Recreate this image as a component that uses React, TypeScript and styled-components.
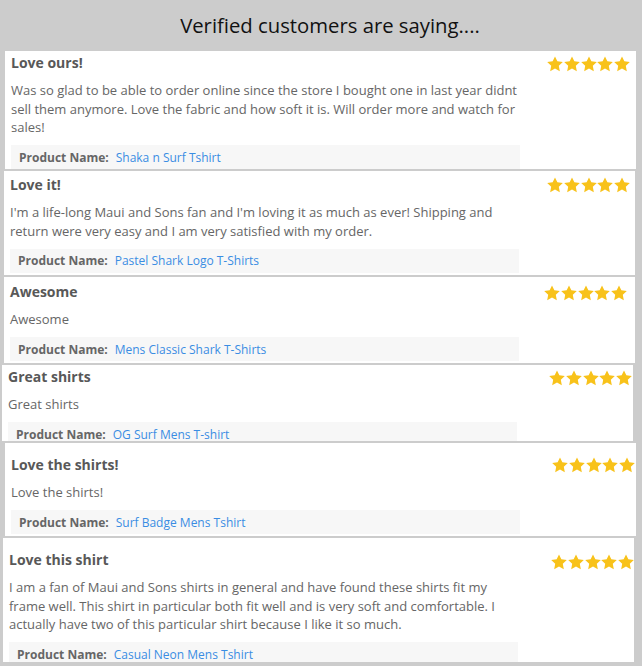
import React from "react";
import styled, { createGlobalStyle } from "styled-components";

const GlobalStyle = createGlobalStyle`
  html, body {
    margin: 0;
    padding: 0;
    background: #cccccc;
  }
  body {
    font-family: "Open Sans", "Liberation Sans", Arial, sans-serif;
    overflow: hidden;
  }
`;

const Page = styled.div`
  width: 642px;
  height: 666px;
  background: #cccccc;
  overflow: hidden;
  display: flex;
  flex-direction: column;
`;

const Heading = styled.h2`
  margin: 0;
  height: 51px;
  display: flex;
  align-items: center;
  justify-content: center;
  font-family: "Open Sans", sans-serif;
  font-weight: 400;
  font-size: 20.3px;
  color: #111;
  padding: 0 0 1px 18px;
  box-sizing: border-box;
`;

const List = styled.div`
  display: flex;
  flex-direction: column;
  gap: 2px;
`;

const Card = styled.div<{ $x: number; $pt: number; $pb: number; $h?: number }>`
  box-sizing: border-box;
  width: 631px;
  flex: none;
  margin-left: ${(p) => p.$x}px;
  background: #ffffff;
  padding: ${(p) => p.$pt}px 6px ${(p) => p.$pb}px 6px;
  display: flex;
  align-items: flex-start;
  ${(p) => (p.$h ? `height: ${p.$h}px; overflow: hidden;` : "")}
`;

const Content = styled.div`
  width: 509px;
  flex: none;
  display: flex;
  flex-direction: column;
`;

const Title = styled.div`
  font-size: 14px;
  line-height: 20px;
  font-weight: 700;
  color: #585858;
`;

const Body = styled.p`
  margin: 8px 0 0 0;
  font-size: 13px;
  line-height: 18.5px;
  color: #666666;
`;

const ProductBar = styled.div`
  margin-top: 8.5px;
  height: 24px;
  flex: none;
  background: #f7f7f7;
  display: flex;
  align-items: center;
  padding-left: 8px;
  font-size: 12px;
`;

const Label = styled.span`
  font-weight: 700;
  color: #666666;
  margin-right: 7px;
`;

const ProductLink = styled.a`
  color: #3a8de3;
  text-decoration: none;
`;

const Stars = styled.div<{ $sx: number; $sy: number }>`
  margin-left: auto;
  margin-right: ${(p) => p.$sx}px;
  margin-top: ${(p) => p.$sy}px;
  display: flex;
  gap: 0.75px;
`;

const Star = () => (
  <svg width="16" height="16" viewBox="0 0 16 16">
    <polygon
      fill="#f8c21a"
      points="8,0.4 10.35,5.36 15.8,6.07 11.8,9.84 12.82,15.23 8,12.6 3.18,15.23 4.2,9.84 0.2,6.07 5.65,5.36"
    />
  </svg>
);

type Review = {
  title: string;
  body: string;
  product: string;
  x: number;
  pt: number;
  pb: number;
  sx: number;
  sy: number;
  h?: number;
};

const reviews: Review[] = [
  {
    title: "Love ours!",
    body:
      "Was so glad to be able to order online since the store I bought one in last year didnt sell them anymore. Love the fabric and how soft it is. Will order more and watch for sales!",
    product: "Shaka n Surf Tshirt",
    x: 5,
    pt: 2,
    pb: 0,
    sx: 0,
    sy: 3,
  },
  {
    title: "Love it!",
    body:
      "I'm a life-long Maui and Sons fan and I'm loving it as much as ever! Shipping and return were very easy and I am very satisfied with my order.",
    product: "Pastel Shark Logo T-Shirts",
    x: 4,
    pt: 4,
    pb: 2.5,
    sx: -1,
    sy: 2,
  },
  {
    title: "Awesome",
    body: "Awesome",
    product: "Mens Classic Shark T-Shirts",
    x: 4,
    pt: 5,
    pb: 2,
    sx: 2,
    sy: 3,
  },
  {
    title: "Great shirts",
    body: "Great shirts",
    product: "OG Surf Mens T-shirt",
    x: 2,
    pt: 2,
    pb: 0,
    sx: -5,
    sy: 3,
    h: 76,
  },
  {
    title: "Love the shirts!",
    body: "Love the shirts!",
    product: "Surf Badge Mens Tshirt",
    x: 5,
    pt: 12,
    pb: 2,
    sx: -5,
    sy: 2,
  },
  {
    title: "Love this shirt",
    body:
      "I am a fan of Maui and Sons shirts in general and have found these shirts fit my frame well. This shirt in particular both fit well and is very soft and comfortable. I actually have two of this particular shirt because I like it so much.",
    product: "Casual Neon Mens Tshirt",
    x: 3,
    pt: 12,
    pb: 0,
    sx: -6,
    sy: 4,
    h: 124,
  },
];

export default function App() {
  return (
    <Page>
      <GlobalStyle />
      <Heading>Verified customers are saying....</Heading>
      <List>
        {reviews.map((r) => (
          <Card key={r.title} $x={r.x} $pt={r.pt} $pb={r.pb} $h={r.h}>
            <Content>
              <Title>{r.title}</Title>
              <Body>{r.body}</Body>
              <ProductBar>
                <Label>Product Name:</Label>
                <ProductLink href="#">{r.product}</ProductLink>
              </ProductBar>
            </Content>
            <Stars $sx={r.sx} $sy={r.sy}>
              {[0, 1, 2, 3, 4].map((i) => (
                <Star key={i} />
              ))}
            </Stars>
          </Card>
        ))}
      </List>
    </Page>
  );
}
